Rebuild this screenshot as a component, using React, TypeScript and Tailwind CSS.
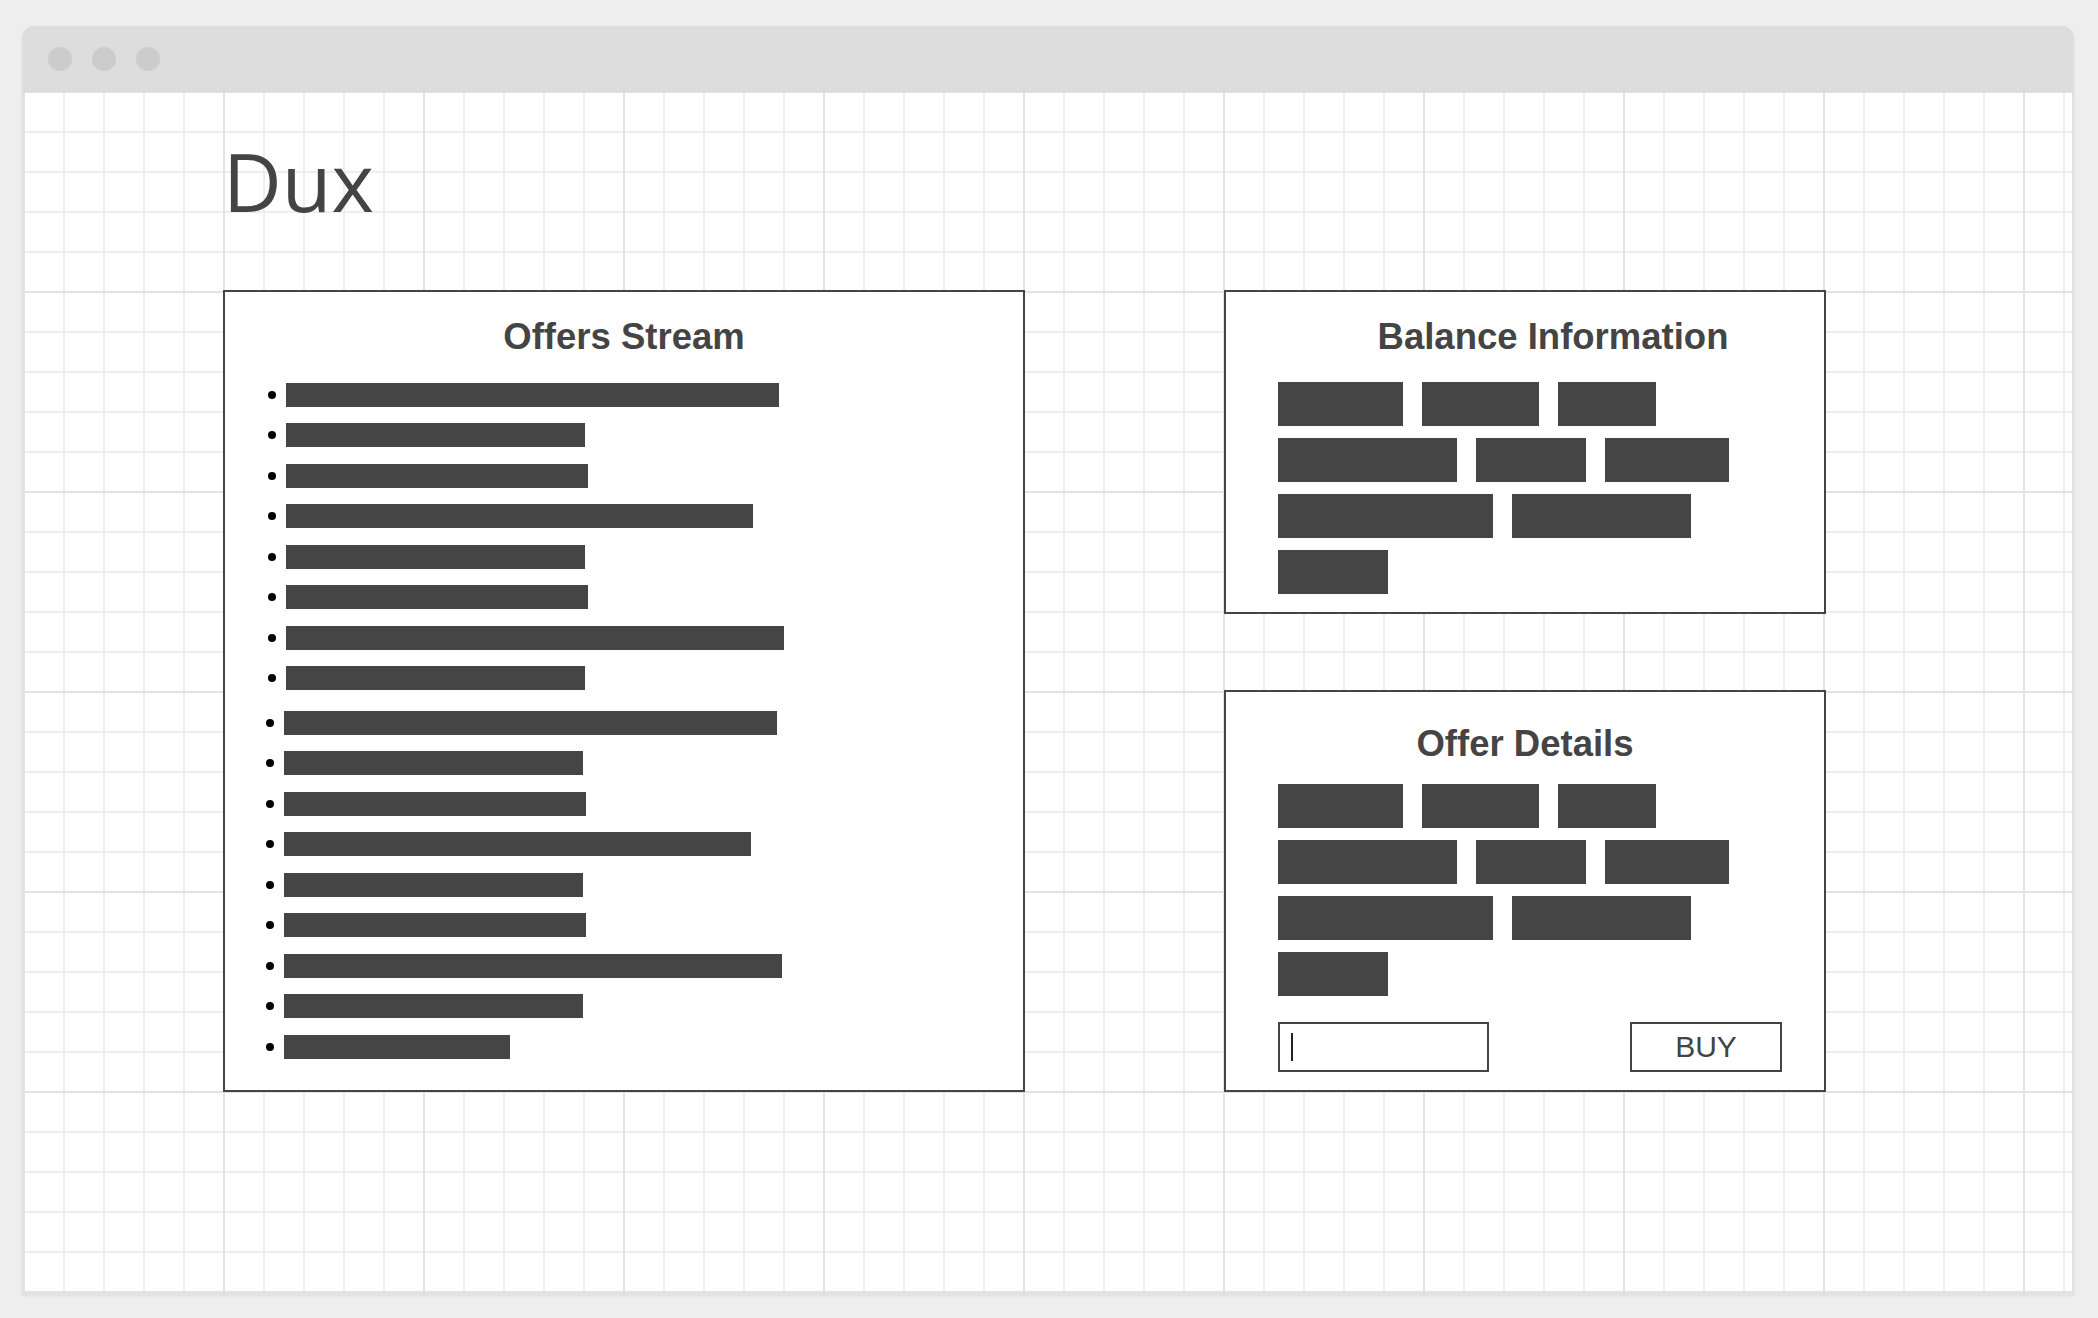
import React from "react";

const list1 = [
  { w: "w-[493px]", mt: "" },
  { w: "w-[299px]", mt: "mt-[16px]" },
  { w: "w-[302px]", mt: "mt-[17px]" },
  { w: "w-[467px]", mt: "mt-[16px]" },
  { w: "w-[299px]", mt: "mt-[17px]" },
  { w: "w-[302px]", mt: "mt-[16px]" },
  { w: "w-[498px]", mt: "mt-[17px]" },
  { w: "w-[299px]", mt: "mt-[16px]" },
];

const list2 = [
  { w: "w-[493px]", mt: "" },
  { w: "w-[299px]", mt: "mt-[16px]" },
  { w: "w-[302px]", mt: "mt-[17px]" },
  { w: "w-[467px]", mt: "mt-[16px]" },
  { w: "w-[299px]", mt: "mt-[17px]" },
  { w: "w-[302px]", mt: "mt-[16px]" },
  { w: "w-[498px]", mt: "mt-[17px]" },
  { w: "w-[299px]", mt: "mt-[16px]" },
  { w: "w-[226px]", mt: "mt-[17px]" },
];

const blockRows = [
  ["w-[125px]", "w-[117px]", "w-[98px]"],
  ["w-[179px]", "w-[110px]", "w-[124px]"],
  ["w-[215px]", "w-[179px]"],
  ["w-[110px]"],
];

function Blocks() {
  return (
    <div className="flex flex-col gap-[12px] pl-[52px]">
      {blockRows.map((row, i) => (
        <div key={i} className="flex gap-[19px]">
          {row.map((w, j) => (
            <div key={j} className={`${w} h-[44px] bg-[#454545]`} />
          ))}
        </div>
      ))}
    </div>
  );
}

function BarList({
  items,
  pl,
  mt,
}: {
  items: { w: string; mt: string }[];
  pl: string;
  mt: string;
}) {
  return (
    <ul className={`${pl} ${mt} flex flex-col`}>
      {items.map((it, i) => (
        <li key={i} className={`${it.mt} flex items-center h-[24px]`}>
          <span className="w-[8px] h-[8px] rounded-full bg-black mr-[10px]" />
          <span className={`${it.w} h-[24px] bg-[#454545]`} />
        </li>
      ))}
    </ul>
  );
}

export default function App() {
  return (
    <div className="min-h-screen w-full bg-[#eeeeee] pt-[26px] pl-[22px] font-['Liberation_Sans',Arial,sans-serif] text-[#444444]">
      <div className="w-[2052px] h-[1268px] flex flex-col shadow-[0_2px_3px_rgba(0,0,0,0.06)]">
        <div className="h-[66px] shrink-0 bg-[#dddddd] rounded-t-[12px] flex items-center gap-[20px] pl-[26px]">
          <span className="w-[24px] h-[24px] rounded-full bg-[#cccccc]" />
          <span className="w-[24px] h-[24px] rounded-full bg-[#cccccc]" />
          <span className="w-[24px] h-[24px] rounded-full bg-[#cccccc]" />
        </div>
        <div className="flex-1 border-2 border-t-0 border-[#e2e2e2] bg-white [background-image:linear-gradient(to_right,#e3e3e3_2px,transparent_2px),linear-gradient(to_bottom,#e3e3e3_2px,transparent_2px),linear-gradient(to_right,#eeeeee_2px,transparent_2px),linear-gradient(to_bottom,#eeeeee_2px,transparent_2px)] [background-size:200px_200px,200px_200px,40px_40px,40px_40px] [background-position:-1px_-1px] pl-[199px] pt-[48px]">
          <h1 className="text-[81px] leading-[81px] font-normal font-['Open_Sans',sans-serif]">Dux</h1>
          <div className="flex items-start mt-[69px]">
            {/* Offers Stream */}
            <section className="w-[802px] h-[802px] border-2 border-[#444444] bg-white pt-[25px]">
              <h2 className="text-[36.5px] leading-[40px] font-bold text-center">Offers Stream</h2>
              <BarList items={list1} pl="pl-[43px]" mt="mt-[26px]" />
              <BarList items={list2} pl="pl-[41px]" mt="mt-[21px]" />
            </section>

            <div className="flex flex-col ml-[199px] gap-[76px]">
              {/* Balance Information */}
              <section className="w-[602px] h-[324px] border-2 border-[#444444] bg-white pt-[25px]">
                <h2 className="text-[36.5px] leading-[40px] font-bold text-center pl-[56px]">Balance Information</h2>
                <div className="mt-[25px]">
                  <Blocks />
                </div>
              </section>

              {/* Offer Details */}
              <section className="w-[602px] h-[402px] border-2 border-[#444444] bg-white pt-[32px]">
                <h2 className="text-[36.5px] leading-[40px] font-bold text-center">Offer Details</h2>
                <div className="mt-[20px]">
                  <Blocks />
                </div>
                <div className="flex justify-between items-center pl-[52px] pr-[42px] mt-[26px]">
                  <div className="w-[211px] h-[50px] border-2 border-[#444444] bg-white flex items-center pl-[11px]">
                    <span className="w-[2px] h-[28px] bg-[#222222]" />
                  </div>
                  <button className="w-[152px] h-[50px] border-2 border-[#444444] bg-white text-[30px] leading-none text-[#444444] flex items-center justify-center">
                    BUY
                  </button>
                </div>
              </section>
            </div>
          </div>
        </div>
      </div>
    </div>
  );
}
